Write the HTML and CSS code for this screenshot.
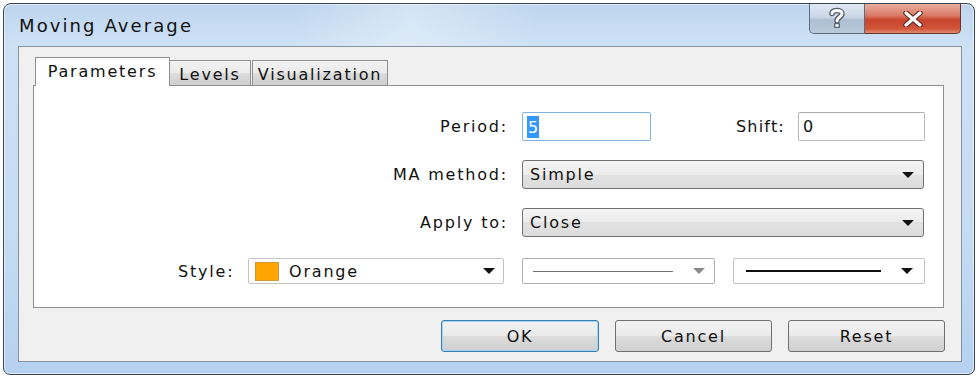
FILE: index.html
```html
<!DOCTYPE html>
<html>
<head>
<meta charset="utf-8">
<title>Moving Average</title>
<link rel="stylesheet" href="styles.css">
</head>
<body>
<div class="window">
  <div class="titlebar">
    <div class="title">Moving Average</div>
    <div class="caption-btns">
      <div class="cap-btn help">
        <svg width="18" height="22" viewBox="0 0 18 22">
          <path d="M4 6.5 C4 2.5 14 2.3 14 6.8 C14 10 9 10.3 9 13.8" stroke="#56626f" stroke-width="5.6" stroke-linecap="round" fill="none"/>
          <rect x="6" y="16" width="6" height="5" rx="1" fill="#56626f"/>
          <path d="M4 6.5 C4 2.5 14 2.3 14 6.8 C14 10 9 10.3 9 13.8" stroke="#ffffff" stroke-width="3" stroke-linecap="round" fill="none"/>
          <rect x="7.4" y="17.2" width="3.2" height="2.6" fill="#ffffff"/>
        </svg>
      </div>
      <div class="cap-btn close">
        <svg width="20" height="16" viewBox="0 0 20 16">
          <path d="M3 2 L17 14 M17 2 L3 14" stroke="#5a2a22" stroke-width="5.5" stroke-linecap="round" fill="none"/>
          <path d="M3 2 L17 14 M17 2 L3 14" stroke="#ffffff" stroke-width="3.2" stroke-linecap="round" fill="none"/>
        </svg>
      </div>
    </div>
  </div>
  <div class="client">
    <div class="tabs">
      <div class="tab active">Parameters</div>
      <div class="tab t-levels">Levels</div>
      <div class="tab t-vis">Visualization</div>
    </div>
    <div class="panel">
      <div class="row r1">
        <span class="lbl">Period:</span>
        <div class="input focus w-period"><span class="selected">5</span></div>
        <span class="lbl-shift">Shift:</span>
        <div class="input w-shift">0</div>
      </div>
      <div class="row r2">
        <span class="lbl">MA method:</span>
        <div class="combo"><span class="combo-text">Simple</span><i class="arrow"></i></div>
      </div>
      <div class="row r3">
        <span class="lbl">Apply to:</span>
        <div class="combo"><span class="combo-text">Close</span><i class="arrow"></i></div>
      </div>
      <div class="row r4">
        <span class="lbl-style">Style:</span>
        <div class="dd dd-color"><span class="swatch"></span><span class="dd-text">Orange</span><i class="arrow"></i></div>
        <div class="dd dd-line1"><span class="line thin"></span><i class="arrow gray"></i></div>
        <div class="dd dd-line2"><span class="line thick"></span><i class="arrow"></i></div>
      </div>
    </div>
    <div class="buttons">
      <div class="btn default">OK</div>
      <div class="btn">Cancel</div>
      <div class="btn">Reset</div>
    </div>
  </div>
</div>
</body>
</html>
```
FILE: styles.css
```css
* { box-sizing: border-box; }
html, body { margin: 0; padding: 0; background: #ffffff; }
body {
  font-family: "DejaVu Sans", "Liberation Sans", sans-serif;
  font-size: 16px;
  letter-spacing: 1.8px;
  color: #111111;
}

.window {
  margin: 3px 0 0 3px;
  width: 972px;
  height: 372px;
  border: 1px solid #3b4450;
  border-radius: 8px 8px 7px 7px;
  background:
    linear-gradient(100deg, rgba(255,255,255,0) 30%, rgba(255,255,255,0.35) 42%, rgba(255,255,255,0) 55%) top / 100% 44px no-repeat,
    linear-gradient(180deg, #bdd5ee 0, #cde1f5 40px, #c6dcf3 60%, #b5d1ef 100%);
  display: flex;
  flex-direction: column;
  overflow: hidden;
  box-shadow: inset 0 0 0 1px rgba(255,255,255,0.55);
}

.titlebar {
  height: 42px;
  display: flex;
  align-items: flex-start;
  flex: none;
}
.title {
  flex: 1;
  padding: 11px 0 0 15px;
  font-size: 18px;
  letter-spacing: 2.1px;
  color: #111111;
}
.caption-btns {
  display: flex;
  margin-right: 13px;
}
.cap-btn {
  height: 30px;
  display: flex;
  align-items: center;
  justify-content: center;
  border: 1px solid #5d6b7c;
  border-top: none;
}
.help {
  width: 56px;
  border-radius: 0 0 0 5px;
  background: linear-gradient(180deg, #dfe8f2 0, #c9d7e6 45%, #aebfd3 55%, #b9cadc 100%);
}
.help svg { margin-top: -1px; }
.close {
  width: 96px;
  border-left: none;
  border-color: #6b3328;
  border-radius: 0 0 5px 0;
  background: linear-gradient(180deg, #e9ad9f 0, #d97a66 40%, #c8432b 55%, #d1553a 85%, #e08a70 100%);
}

.client {
  flex: 1;
  margin: 0 12px 12px 14px;
  background: #f0f0f0;
  border: 1px solid #8893a0;
  padding: 10px 17px 0 14px;
  display: flex;
  flex-direction: column;
}

.tabs {
  display: flex;
  align-items: flex-end;
  height: 28px;
  margin-left: 2px;
  position: relative;
  z-index: 1;
}
.tab {
  height: 25px;
  display: flex;
  align-items: center;
  justify-content: center;
  border: 1px solid #8e8f8f;
  border-bottom: none;
  background: linear-gradient(180deg, #f2f2f2 0, #ebebeb 50%, #dddddd 50%, #cfcfcf 100%);
  padding-top: 3px;
}
.tab.active {
  width: 135px;
  height: 29px;
  margin-bottom: -1px;
  background: #ffffff;
  padding-top: 0;
  padding-bottom: 2px;
}
.t-levels { width: 81px; border-left: none; }
.t-vis { width: 136px; margin-left: 1px; }

.panel {
  height: 223px;
  border: 1px solid #8e8f8f;
  background: #ffffff;
  padding-top: 26px;
  display: flex;
  flex-direction: column;
  gap: 19px;
}
.row {
  display: flex;
  align-items: center;
  height: 29px;
}
.r4 { height: 26px; margin-top: 2px; }

.lbl {
  width: 474px;
  margin-right: 14px;
  text-align: right;
}
.lbl-shift {
  width: 62px;
  margin-left: 85px;
  letter-spacing: 1.2px;
}
.lbl-style {
  width: 70px;
  margin-left: 144px;
}

.input {
  height: 29px;
  border: 1px solid #b5bac2;
  border-top-color: #abadb3;
  border-radius: 2px;
  background: #ffffff;
  display: flex;
  align-items: center;
  padding-left: 4px;
}
.input.focus { border-color: #7fb3e4; }
.w-period { width: 129px; }
.w-shift { width: 127px; }
.selected {
  background: #3399ff;
  color: #ffffff;
  padding: 2px 1px 1px 1px;
  letter-spacing: 0;
}

.combo {
  width: 402px;
  height: 29px;
  border: 1px solid #707070;
  border-radius: 3px;
  background: linear-gradient(180deg, #f4f4f4 0, #ececec 50%, #e2e2e2 50%, #dcdcdc 100%);
  display: flex;
  align-items: center;
  padding: 0 9px 0 7px;
}
.combo-text, .dd-text { flex: 1; }

.arrow {
  width: 0;
  height: 0;
  border-left: 6px solid transparent;
  border-right: 6px solid transparent;
  border-top: 6px solid #111111;
}
.arrow.gray { border-top-color: #8a8a8a; }

.dd {
  height: 26px;
  border: 1px solid #c3c3c3;
  border-radius: 2px;
  background: #ffffff;
  display: flex;
  align-items: center;
}
.dd-color { width: 256px; padding: 0 8px 0 6px; }
.dd-line1 { width: 193px; margin-left: 18px; padding: 0 10px 0 10px; border-color: #b0b0b0; }
.dd-line2 { width: 192px; margin-left: 18px; padding: 0 8px 0 12px; }
.swatch {
  width: 24px;
  height: 19px;
  background: #ffa500;
  border: 1px solid #d49a3a;
  margin-right: 10px;
}
.line { display: block; flex: none; }
.line.thin { width: 140px; height: 1px; background: #6e6e6e; margin-right: 20px; }
.line.thick { width: 135px; height: 2px; background: #111111; margin-right: 20px; }

.buttons {
  display: flex;
  justify-content: flex-end;
  gap: 16px;
  margin-top: 12px;
  margin-right: -1px;
}
.btn {
  width: 157px;
  height: 32px;
  border: 1px solid #707070;
  border-radius: 3px;
  background: linear-gradient(180deg, #f2f2f2 0, #ebebeb 50%, #dddddd 50%, #cfcfcf 100%);
  display: flex;
  align-items: center;
  justify-content: center;
}
.btn.default {
  width: 158px;
  border-color: #3c7fb1;
  box-shadow: inset 0 0 0 1px #9fd4f5;
}
```
